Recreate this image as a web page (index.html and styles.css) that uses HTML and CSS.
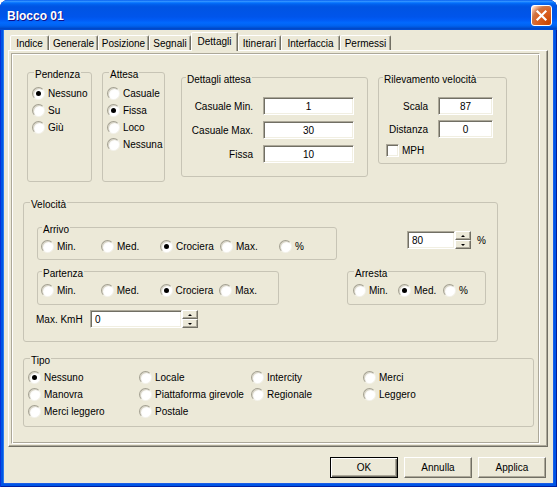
FILE: index.html
```html
<!DOCTYPE html>
<html lang="it">
<head>
<meta charset="utf-8">
<title>Blocco 01</title>
<link rel="stylesheet" href="styles.css">
</head>
<body>
<div class="window">
  <div class="titlebar">
    <span class="title">Blocco 01</span>
    <div class="close" aria-label="Chiudi">
      <svg width="19" height="19" viewBox="0 0 19 19"><path d="M5.5 5.5 L13.5 13.5 M13.5 5.5 L5.5 13.5" stroke="#fff" stroke-width="2.2" stroke-linecap="square"/></svg>
    </div>
  </div>
  <div class="client">
    <div class="tabs">
      <div class="tab t-indice">Indice</div>
      <div class="tab t-generale">Generale</div>
      <div class="tab t-posizione">Posizione</div>
      <div class="tab t-segnali">Segnali</div>
      <div class="tab t-dettagli active">Dettagli</div>
      <div class="tab t-itinerari">Itinerari</div>
      <div class="tab t-interfaccia">Interfaccia</div>
      <div class="tab t-permessi">Permessi</div>
    </div>
    <div class="tabpanel">
      <div class="page">
        <div class="row1">
          <div class="group g-pend">
            <div class="legend">Pendenza</div>
            <div class="vlist">
              <div class="opt"><span class="radio on"></span>Nessuno</div>
              <div class="opt"><span class="radio"></span>Su</div>
              <div class="opt"><span class="radio"></span>Giù</div>
            </div>
          </div>
          <div class="group g-att">
            <div class="legend">Attesa</div>
            <div class="vlist">
              <div class="opt"><span class="radio"></span>Casuale</div>
              <div class="opt"><span class="radio on"></span>Fissa</div>
              <div class="opt"><span class="radio"></span>Loco</div>
              <div class="opt"><span class="radio"></span>Nessuna</div>
            </div>
          </div>
          <div class="group g-det">
            <div class="legend tight">Dettagli attesa</div>
            <div class="form f-det">
              <span class="lbl">Casuale Min.</span><div class="field center">1</div>
              <span class="lbl">Casuale Max.</span><div class="field center">30</div>
              <span class="lbl">Fissa</span><div class="field center">10</div>
            </div>
          </div>
          <div class="group g-ril">
            <div class="legend tight">Rilevamento velocità</div>
            <div class="form f-ril">
              <span class="lbl">Scala</span><div class="field center">87</div>
              <span class="lbl">Distanza</span><div class="field center">0</div>
            </div>
            <div class="check-row"><span class="check"></span>MPH</div>
          </div>
        </div>

        <div class="group g-vel">
          <div class="legend">Velocità</div>
          <div class="vel-row1">
            <div class="group g-arr">
              <div class="legend tight">Arrivo</div>
              <div class="hlist">
                <div class="opt w60"><span class="radio"></span>Min.</div>
                <div class="opt w59"><span class="radio"></span>Med.</div>
                <div class="opt w60"><span class="radio on"></span>Crociera</div>
                <div class="opt w59"><span class="radio"></span>Max.</div>
                <div class="opt"><span class="radio"></span>%</div>
              </div>
            </div>
            <div class="num">
              <div class="field f-80">80</div>
              <div class="spin"><span class="spin-btn up"></span><span class="spin-btn down"></span></div>
              <span class="pct">%</span>
            </div>
          </div>
          <div class="vel-row2">
            <div class="group g-part">
              <div class="legend tight">Partenza</div>
              <div class="hlist">
                <div class="opt w60"><span class="radio"></span>Min.</div>
                <div class="opt w59"><span class="radio"></span>Med.</div>
                <div class="opt w60"><span class="radio on"></span>Crociera</div>
                <div class="opt w59"><span class="radio"></span>Max.</div>
              </div>
            </div>
            <div class="group g-arresta">
              <div class="legend">Arresta</div>
              <div class="hlist arr-list">
                <div class="opt w45"><span class="radio"></span>Min.</div>
                <div class="opt w45"><span class="radio on"></span>Med.</div>
                <div class="opt"><span class="radio"></span>%</div>
              </div>
            </div>
          </div>
          <div class="kmh">
            <span class="kmh-lbl">Max. KmH</span>
            <div class="field f-kmh">0</div>
            <div class="spin"><span class="spin-btn up"></span><span class="spin-btn down"></span></div>
          </div>
        </div>

        <div class="group g-tipo">
          <div class="legend">Tipo</div>
          <div class="tipo-grid">
            <div class="opt"><span class="radio on"></span>Nessuno</div>
            <div class="opt"><span class="radio"></span>Locale</div>
            <div class="opt"><span class="radio"></span>Intercity</div>
            <div class="opt"><span class="radio"></span>Merci</div>
            <div class="opt"><span class="radio"></span>Manovra</div>
            <div class="opt"><span class="radio"></span>Piattaforma girevole</div>
            <div class="opt"><span class="radio"></span>Regionale</div>
            <div class="opt"><span class="radio"></span>Leggero</div>
            <div class="opt"><span class="radio"></span>Merci leggero</div>
            <div class="opt"><span class="radio"></span>Postale</div>
          </div>
        </div>
      </div>
    </div>
    <div class="buttons">
      <button class="btn default">OK</button>
      <button class="btn">Annulla</button>
      <button class="btn">Applica</button>
    </div>
  </div>
</div>
</body>
</html>
```
FILE: styles.css
```css
* { box-sizing: border-box; }
html, body { margin: 0; padding: 0; }
body {
  width: 557px;
  height: 487px;
  overflow: hidden;
  background: #ffffff;
  font-family: "Liberation Sans", Arial, sans-serif;
  font-size: 10px;
  color: #000;
}
.window {
  width: 557px;
  height: 487px;
  display: flex;
  flex-direction: column;
  background: #0055e5;
  border-radius: 8px 8px 0 0;
  box-shadow: inset 1px 0 #0831d9, inset -1px 0 #001ea0, inset 0 -1px #001ea0;
}
.titlebar {
  height: 30px;
  flex: none;
  display: flex;
  align-items: center;
  padding: 0 5px 0 7px;
  border-radius: 8px 8px 0 0;
  background: linear-gradient(to bottom, #0058ee 0%, #3593ff 4%, #288eff 6%, #127dff 8%, #036ffc 10%, #0262ee 14%, #0057e5 20%, #0054e3 24%, #0055eb 56%, #005bf5 66%, #026afe 76%, #0062ef 86%, #0052d6 92%, #0046c4 96%, #0050dc 100%);
}
.title {
  flex: 1;
  color: #fff;
  font-weight: bold;
  font-size: 12px;
  padding-top: 2px;
  text-shadow: 1px 1px #0f1089;
}
.close {
  width: 21px;
  height: 21px;
  border: 1px solid #fff;
  border-radius: 3px;
  display: flex;
  align-items: center;
  justify-content: center;
  background: radial-gradient(circle at 90% 90%, #cc4600 0%, #dc6527 55%, #cd7546 70%, #ffccb2 90%, #fff 100%);
}
.client {
  flex: 1;
  margin: 0 4px 4px;
  background: #ece9d8;
  display: flex;
  flex-direction: column;
  box-shadow: -1px 0 #2a7af0, 1px 0 #1a5de8, 0 1px #1a5de8;
}

/* tabs */
.tabs {
  height: 20px;
  flex: none;
  display: flex;
  align-items: flex-end;
  padding: 2px 0 0 6px;
  position: relative;
  z-index: 1;
}
.tab {
  height: 15px;
  border: 1px solid;
  border-bottom: 0;
  border-color: #fff #716f64 transparent #fff;
  border-radius: 2px 2px 0 0;
  box-shadow: inset -1px 0 #aca899;
  display: flex;
  align-items: center;
  justify-content: center;
  white-space: nowrap;
  background: #ece9d8;
}
.tab.active { height: 19px; margin-bottom: -1px; padding-bottom: 1px; }
.t-indice { width: 39px; }
.t-generale { width: 49px; }
.t-posizione { width: 51px; }
.t-segnali { width: 42px; }
.t-dettagli { width: 47px; }
.t-itinerari { width: 43px; }
.t-interfaccia { width: 59px; }
.t-permessi { width: 51px; }

.tabpanel {
  flex: none;
  margin-left: 4px;
  width: 540px;
  height: 397px;
  border: 1px solid;
  border-color: #fff #716f64 #716f64 #fff;
  box-shadow: inset -1px -1px #aca899;
  padding: 2px;
}
.page {
  width: 529px;
  height: 391px;
  border: 1px solid;
  border-color: #aca899 #fff #fff #aca899;
  box-shadow: inset 1px 1px #fff, inset -1px -1px #aca899;
  padding: 18px 0 0 11px;
}

/* group boxes */
.group {
  border: 1px solid #c7c4b5;
  border-radius: 3px;
  flex: none;
}
.legend {
  width: fit-content;
  height: 13px;
  line-height: 13px;
  margin: -5px 0 0 6px;
  padding: 0 1px;
  background: #ece9d8;
  white-space: nowrap;
}
.legend.tight { margin-left: 4px; }

.row1 { display: flex; align-items: flex-start; padding-left: 4px; }
.g-pend { width: 65px; height: 110px; }
.g-att { width: 63px; height: 110px; margin-left: 10px; }
.g-det { width: 187px; height: 100px; margin-left: 16px; margin-top: 5px; }
.g-ril { width: 129px; height: 87px; margin-left: 10px; margin-top: 5px; }

.vlist { display: flex; flex-direction: column; padding: 4px 0 0 4px; }
.opt {
  display: flex;
  align-items: center;
  height: 17px;
  white-space: nowrap;
}
.radio {
  width: 13px;
  height: 13px;
  flex: none;
  margin-right: 3px;
  border-radius: 50%;
  border: 1px solid;
  border-color: #a4a192 #f4f3ec #f4f3ec #a4a192;
  background: radial-gradient(circle at 65% 65%, #ffffff 45%, #eceae0 100%);
  box-shadow: inset 1px 1px 0 #d8d5c7;
  display: flex;
  align-items: center;
  justify-content: center;
}
.radio.on::after {
  content: "";
  width: 5px;
  height: 5px;
  border-radius: 50%;
  background: #000;
}

.form {
  display: grid;
  column-gap: 10px;
  padding-top: 11px;
}
.f-det { grid-template-columns: 71px 91px; row-gap: 6px; }
.f-ril { grid-template-columns: 49px 55px; row-gap: 5px; }
.lbl { text-align: right; align-self: center; white-space: nowrap; }
.field {
  height: 18px;
  background: #fff;
  border: 1px solid;
  border-color: #aca899 #fff #fff #aca899;
  box-shadow: inset 1px 1px #716f64, inset -1px -1px #f1efe2;
  display: flex;
  align-items: center;
  padding: 0 4px;
  white-space: nowrap;
}
.field.center { justify-content: center; }
.check-row { display: flex; align-items: center; margin: 6px 0 0 7px; }
.check {
  width: 13px;
  height: 13px;
  margin-right: 3px;
  background: #fff;
  border: 1px solid;
  border-color: #aca899 #fff #fff #aca899;
  box-shadow: inset 1px 1px #716f64, inset -1px -1px #f1efe2;
}

/* velocita */
.g-vel { width: 475px; height: 140px; margin-top: 20px; }
.vel-row1 { display: flex; align-items: flex-start; margin: 16px 0 0 13px; }
.g-arr { width: 300px; height: 33px; }
.hlist { display: flex; padding: 2px 0 0 3px; }
.hlist .opt { height: 16px; }
.w60 { width: 60px; }
.w59 { width: 59px; }
.w45 { width: 45px; }
.num { display: flex; align-items: center; margin: 4px 0 0 70px; }
.f-80 { width: 48px; }
.spin { display: flex; flex-direction: column; width: 16px; height: 18px; }
.spin-btn {
  flex: 1;
  background: #ece9d8;
  border: 1px solid;
  border-color: #fff #716f64 #716f64 #fff;
  box-shadow: inset -1px -1px #aca899;
  display: flex;
  align-items: center;
  justify-content: center;
}
.spin-btn.up::before {
  content: "";
  border-left: 2px solid transparent;
  border-right: 2px solid transparent;
  border-bottom: 2px solid #000;
}
.spin-btn.down::before {
  content: "";
  border-left: 2px solid transparent;
  border-right: 2px solid transparent;
  border-top: 2px solid #000;
}
.pct { margin-left: 6px; }
.vel-row2 { display: flex; align-items: flex-start; margin: 11px 0 0 13px; }
.g-part { width: 242px; height: 34px; }
.g-arresta { width: 139px; height: 34px; margin-left: 68px; }
.arr-list { padding-left: 5px; }
.kmh { display: flex; align-items: center; margin: 5px 0 0 12px; }
.kmh-lbl { width: 54px; white-space: nowrap; }
.f-kmh { width: 92px; }

/* tipo */
.g-tipo { width: 511px; height: 69px; margin-top: 16px; }
.tipo-grid {
  display: grid;
  grid-template-columns: 111px 112px 112px auto;
  grid-auto-rows: 17px;
  padding: 2px 0 0 4px;
}

/* buttons */
.buttons {
  display: flex;
  justify-content: flex-end;
  gap: 6px;
  margin: 10px 7px 0 0;
}
.btn {
  width: 68px;
  height: 21px;
  padding: 0;
  font: inherit;
  color: #000;
  background: #ece9d8;
  border: 1px solid;
  border-color: #fff #716f64 #716f64 #fff;
  box-shadow: inset -1px -1px #aca899;
  border-radius: 0;
}
.btn.default {
  border-color: #000;
  box-shadow: inset 1px 1px #fff, inset -1px -1px #716f64, inset -2px -2px #aca899;
}
```
